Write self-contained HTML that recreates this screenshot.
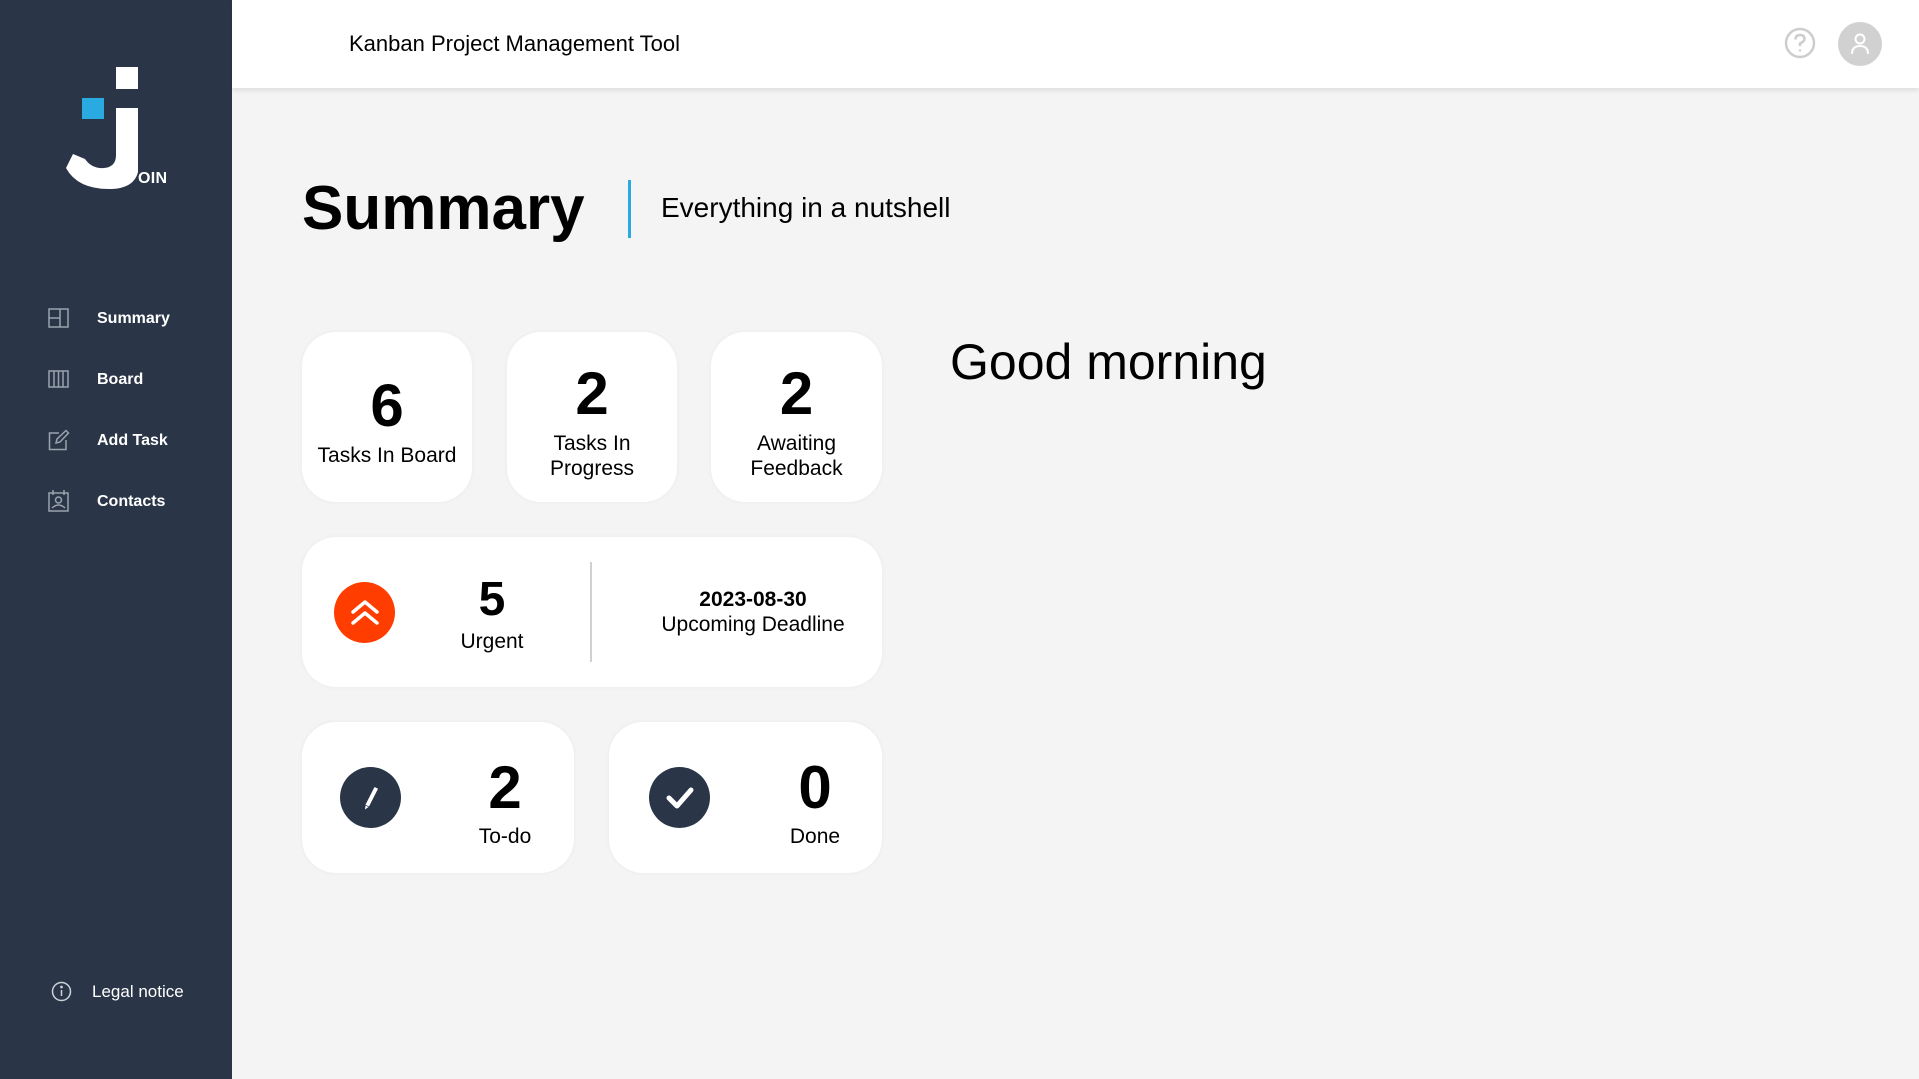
<!DOCTYPE html>
<html><head><meta charset="utf-8"><style>
*{margin:0;padding:0;box-sizing:border-box}
body{width:1919px;height:1079px;background:#f4f4f4;font-family:"Liberation Sans",Arial,sans-serif;position:relative;overflow:hidden;color:#000}
.abs{position:absolute}
#side{left:0;top:0;width:232px;height:1079px;background:#2a3647}
#head{left:232px;top:0;width:1687px;height:88px;background:#fff;box-shadow:0 3px 4px rgba(0,0,0,.08)}
.nav{position:absolute;left:97px;color:#fff;font-size:16px;font-weight:bold;line-height:20px}
.ic{position:absolute;left:48px}
.card{position:absolute;background:#fff;border-radius:34px;box-shadow:0 0 4px rgba(0,0,0,.05)}
.num{position:absolute;width:100%;text-align:center;font-size:60px;font-weight:bold;line-height:60px}
.lab{position:absolute;width:100%;text-align:center;font-size:21px;line-height:25px}
</style></head><body>
<div id="side" class="abs">
<svg class="abs" style="left:60px;top:62px" width="120" height="130" viewBox="0 0 120 130">
<rect x="56" y="5" width="22" height="22" fill="#fff"/>
<rect x="22" y="36" width="22" height="21" fill="#29abe2"/>
<path d="M56 46 H78 V110 Q74 126 52 127 Q18 128 6 106 L13 92 L25 97 Q32 107 44 106 Q56 105 56 93 Z" fill="#fff"/>
<text x="78" y="121" fill="#fff" font-family="Liberation Sans" font-weight="bold" font-size="16" textLength="29">OIN</text>
</svg>
<svg class="ic" style="top:308px" width="21" height="20" viewBox="0 0 21 20" fill="none" stroke="#9aa3ae" stroke-width="1.5"><rect x="1" y="1" width="19" height="18"/><line x1="12" y1="1" x2="12" y2="19"/><line x1="1" y1="10" x2="12" y2="10"/></svg>
<div class="nav" style="top:309px">Summary</div>
<svg class="ic" style="top:370px" width="21" height="18" viewBox="0 0 21 18" fill="none" stroke="#9aa3ae" stroke-width="1.5"><rect x="1" y="1" width="19" height="16"/><line x1="6" y1="1" x2="6" y2="17"/><line x1="10.5" y1="1" x2="10.5" y2="17"/><line x1="15" y1="1" x2="15" y2="17"/></svg>
<div class="nav" style="top:370px">Board</div>
<svg class="ic" style="top:429px" width="22" height="22" viewBox="0 0 22 22" fill="none" stroke="#9aa3ae" stroke-width="1.5"><path d="M11 4 H1.5 V20.5 H18 V11"/><path d="M8 14 L9 10 L18 1.5 L20.5 4 L12 13 Z"/></svg>
<div class="nav" style="top:431px">Add Task</div>
<svg class="ic" style="top:490px" width="21" height="22" viewBox="0 0 21 22" fill="none" stroke="#9aa3ae" stroke-width="1.5"><rect x="1" y="3" width="19" height="18"/><line x1="5" y1="0" x2="5" y2="5"/><line x1="16" y1="0" x2="16" y2="5"/><circle cx="10.5" cy="10" r="3"/><path d="M4 18 Q10.5 12 17 18"/></svg>
<div class="nav" style="top:492px">Contacts</div>
<svg class="abs" style="left:51px;top:981px" width="21" height="21" viewBox="0 0 21 21" fill="none" stroke="#cdd2d8" stroke-width="1.5"><circle cx="10.5" cy="10.5" r="9"/><line x1="10.5" y1="9" x2="10.5" y2="15"/><circle cx="10.5" cy="6" r=".6" fill="#cdd2d8"/></svg>
<div class="nav" style="left:92px;top:982px;font-weight:normal;font-size:17px">Legal notice</div>
</div>
<div id="head" class="abs">
<div class="abs" style="left:117px;top:32px;font-size:22px;line-height:24px">Kanban Project Management Tool</div>
<svg class="abs" style="left:1552px;top:27px" width="32" height="32" viewBox="0 0 32 32" fill="none" stroke="#cdcdcd" stroke-width="2.5"><circle cx="16" cy="16" r="14"/><path d="M11.5 12.5 Q11.5 8 16 8 Q20.5 8 20.5 12 Q20.5 14.5 16 16.5 V19"/><circle cx="16" cy="23.5" r="1.2" fill="#cdcdcd" stroke="none"/></svg>
<div class="abs" style="left:1606px;top:22px;width:44px;height:44px;border-radius:50%;background:#d1d1d1"></div>
<svg class="abs" style="left:1618px;top:33px" width="20" height="22" viewBox="0 0 20 22" fill="none" stroke="#fff" stroke-width="2"><circle cx="10" cy="6" r="4.5"/><path d="M2 21 Q2 13 10 13 Q18 13 18 21"/></svg>
</div>
<div class="abs" style="left:302px;top:171px;font-size:62px;font-weight:bold;line-height:76px">Summary</div>
<div class="abs" style="left:628px;top:180px;width:3px;height:58px;background:#29abe2"></div>
<div class="abs" style="left:661px;top:192px;font-size:28px;line-height:32px">Everything in a nutshell</div>
<div class="abs" style="left:950px;top:333px;font-size:50px;line-height:58px">Good morning</div>

<div class="card" style="left:302px;top:332px;width:170px;height:170px"><div class="num" style="top:44px">6</div><div class="lab" style="top:111px">Tasks In Board</div></div>
<div class="card" style="left:507px;top:332px;width:170px;height:170px"><div class="num" style="top:32px">2</div><div class="lab" style="top:99px">Tasks In<br>Progress</div></div>
<div class="card" style="left:711px;top:332px;width:171px;height:170px"><div class="num" style="top:32px">2</div><div class="lab" style="top:99px">Awaiting<br>Feedback</div></div>

<div class="card" style="left:302px;top:537px;width:580px;height:150px">
<div class="abs" style="left:32px;top:45px;width:61px;height:61px;border-radius:50%;background:#ff3d00"></div>
<svg class="abs" style="left:44px;top:57px" width="38" height="38" viewBox="0 0 38 38" fill="none" stroke="#fff" stroke-width="3.5" stroke-linecap="round" stroke-linejoin="round"><path d="M7 18 L19 8 L31 18"/><path d="M7 29 L19 19 L31 29"/></svg>
<div class="num" style="left:140px;width:100px;top:38px;font-size:48px;line-height:50px">5</div>
<div class="lab" style="left:140px;width:100px;top:92px">Urgent</div>
<div class="abs" style="left:288px;top:25px;width:2px;height:100px;background:#d1d1d1"></div>
<div class="lab" style="left:350px;width:202px;top:50px;font-weight:bold">2023-08-30</div>
<div class="lab" style="left:330px;width:242px;top:75px">Upcoming Deadline</div>
</div>

<div class="card" style="left:302px;top:722px;width:272px;height:151px">
<div class="abs" style="left:38px;top:45px;width:61px;height:61px;border-radius:50%;background:#2a3647"></div>
<svg class="abs" style="left:53px;top:60px" width="32" height="32" viewBox="0 0 32 32"><path d="M19.5 5 L23 6.8 L14 24.5 L10.5 22.7 Z" fill="#fff"/><path d="M10.5 23.5 L13.5 25 L10 27.5 Z" fill="#fff"/></svg>
<div class="num" style="left:153px;width:100px;top:36px">2</div>
<div class="lab" style="left:153px;width:100px;top:102px">To-do</div>
</div>
<div class="card" style="left:609px;top:722px;width:273px;height:151px">
<div class="abs" style="left:40px;top:45px;width:61px;height:61px;border-radius:50%;background:#2a3647"></div>
<svg class="abs" style="left:52px;top:57px" width="38" height="38" viewBox="0 0 38 38" fill="none" stroke="#fff" stroke-width="5" stroke-linecap="round" stroke-linejoin="round"><path d="M8 19 L16 27 L30 11"/></svg>
<div class="num" style="left:156px;width:100px;top:36px">0</div>
<div class="lab" style="left:156px;width:100px;top:102px">Done</div>
</div>
</body></html>
